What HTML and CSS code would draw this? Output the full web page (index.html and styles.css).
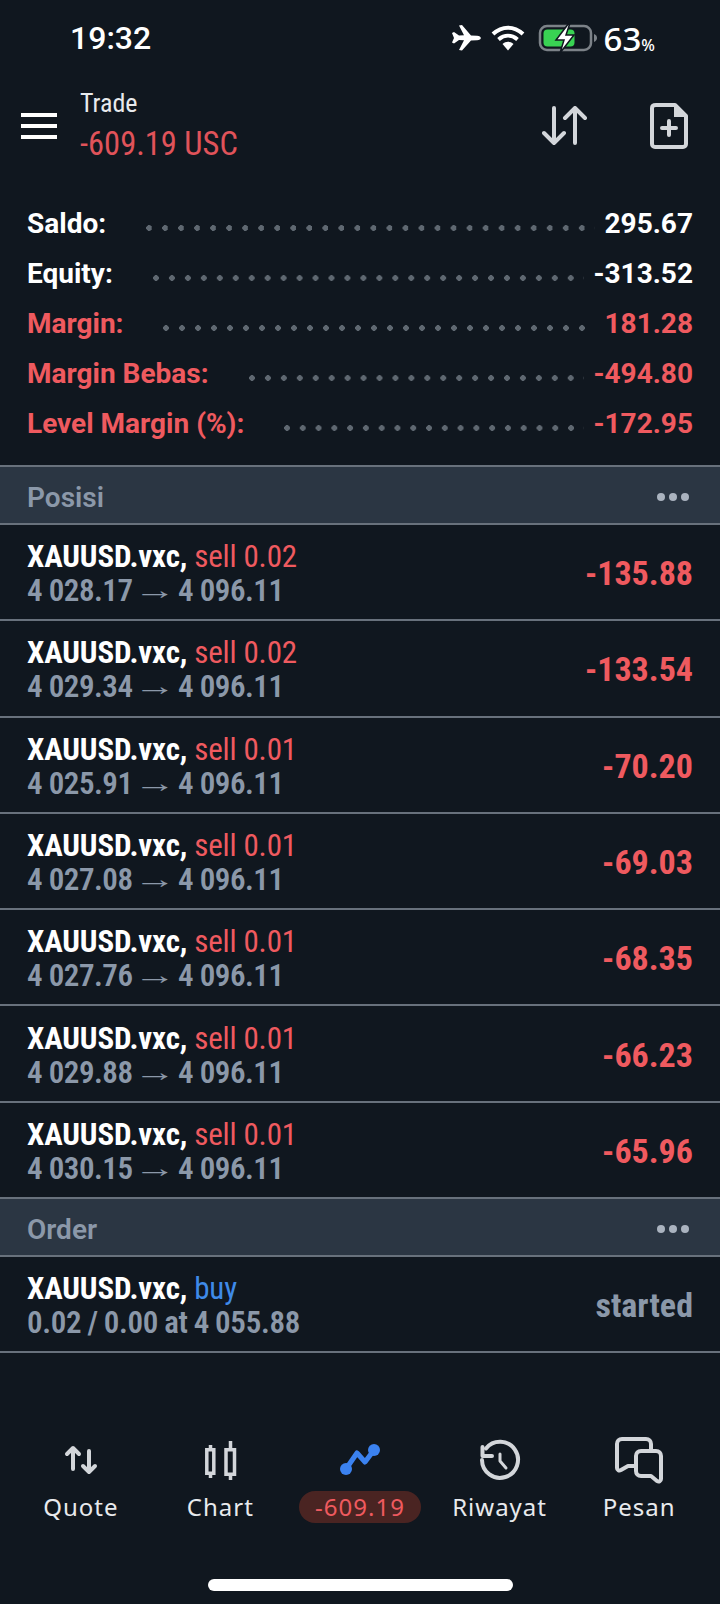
FILE: index.html
```html
<!DOCTYPE html>
<html>
  <head>
    <meta charset="utf-8">
    <title>Trade</title>
    <link rel="stylesheet" href="styles.css">
  </head>
  <body>
    <!-- status bar -->
    <div class="status">
      <span class="time">19:32</span>
      <div class="status-icons">
        <svg width="30" height="28" viewBox="0 0 30 28"><path fill="#fff" d="M1 9l2-1 5 3.500 5-.2L8 1.500 11 1l9 10.500 6 .2c2.500.2 3.800 1 3.800 2.300s-1.300 2.100-3.800 2.300l-6 .2L11 26.500 8 26l5-9.800-5-.2-5 3.500-2-1 2-4.500z"/></svg>
        <svg class="ic-wifi" width="34" height="26" viewBox="0 0 34 26"><path fill="none" stroke="#fff" stroke-width="4" d="M2 9c9-8.500 21-8.500 30 0M7.500 14.500c6-5 13-5 19 0"/><path fill="#fff" d="M11.500 19c3.500-3 7.500-3 11 0L17 25.500z"/></svg>
        <svg width="60" height="30" viewBox="0 0 60 30">
          <rect x="2" y="3" width="51" height="24" rx="7" fill="none" stroke="#7c8288" stroke-width="2.500"/>
          <rect x="5.500" y="6.500" width="31" height="17" rx="4" fill="#39d353"/>
          <path fill="#7c8288" d="M56 11c2 .8 3 2.200 3 4s-1 3.200-3 4z"/>
          <path fill="#fff" stroke="#10171f" stroke-width="1.500" d="M31 0L18 17h8l-4 13 14-18h-8l4-12z"/>
        </svg>
        <span class="batt">63<small>%</small></span>
      </div>
    </div>

    <!-- top bar -->
    <header class="topbar">
      <div class="burger"><i></i><i></i><i></i></div>
      <div class="title">
        <div class="title-sm">Trade</div>
        <div class="title-lg">-609.19 USC</div>
      </div>
      <svg class="ic-swap" width="46" height="40" viewBox="0 0 46 40"><path fill="none" stroke="#d3d6da" stroke-width="4" stroke-linecap="round" stroke-linejoin="round" d="M12 2v35M2 27l10 10 10-10M33 37V2M23 12L33 2l10 10"/></svg>
      <svg class="ic-doc" width="38" height="46" viewBox="0 0 38 46"><path fill="none" stroke="#d3d6da" stroke-width="4" stroke-linejoin="round" d="M6 2h19l11 11v28c0 1.700-1.300 3-3 3H5c-1.700 0-3-1.300-3-3V5c0-1.700 1.300-3 4-3z"/><path fill="#d3d6da" d="M24 2l12 12H24z"/><path fill="none" stroke="#d3d6da" stroke-width="4" stroke-linecap="round" d="M19 18v14M12 25h14"/></svg>
    </header>

    <!-- account summary -->
    <section class="summary">
      <div class="sum-row"><span>Saldo:</span><i class="leader"></i><span>295.67</span></div>
      <div class="sum-row"><span>Equity:</span><i class="leader"></i><span>-313.52</span></div>
      <div class="sum-row red"><span>Margin:</span><i class="leader"></i><span>181.28</span></div>
      <div class="sum-row red"><span>Margin Bebas:</span><i class="leader"></i><span>-494.80</span></div>
      <div class="sum-row red"><span>Level Margin (%):</span><i class="leader"></i><span>-172.95</span></div>
    </section>

    <div class="sec-head"><span>Posisi</span><div class="more"><i></i><i></i><i></i></div></div>

    <div class="row">
      <div class="row-left"><div class="l1"><b>XAUUSD.vxc,</b> <span class="red">sell 0.02</span></div><div class="l2">4 028.17 <em>→</em> 4 096.11</div></div>
      <div class="profit">-135.88</div>
    </div>
    <div class="row">
      <div class="row-left"><div class="l1"><b>XAUUSD.vxc,</b> <span class="red">sell 0.02</span></div><div class="l2">4 029.34 <em>→</em> 4 096.11</div></div>
      <div class="profit">-133.54</div>
    </div>
    <div class="row">
      <div class="row-left"><div class="l1"><b>XAUUSD.vxc,</b> <span class="red">sell 0.01</span></div><div class="l2">4 025.91 <em>→</em> 4 096.11</div></div>
      <div class="profit">-70.20</div>
    </div>
    <div class="row">
      <div class="row-left"><div class="l1"><b>XAUUSD.vxc,</b> <span class="red">sell 0.01</span></div><div class="l2">4 027.08 <em>→</em> 4 096.11</div></div>
      <div class="profit">-69.03</div>
    </div>
    <div class="row">
      <div class="row-left"><div class="l1"><b>XAUUSD.vxc,</b> <span class="red">sell 0.01</span></div><div class="l2">4 027.76 <em>→</em> 4 096.11</div></div>
      <div class="profit">-68.35</div>
    </div>
    <div class="row">
      <div class="row-left"><div class="l1"><b>XAUUSD.vxc,</b> <span class="red">sell 0.01</span></div><div class="l2">4 029.88 <em>→</em> 4 096.11</div></div>
      <div class="profit">-66.23</div>
    </div>
    <div class="row">
      <div class="row-left"><div class="l1"><b>XAUUSD.vxc,</b> <span class="red">sell 0.01</span></div><div class="l2">4 030.15 <em>→</em> 4 096.11</div></div>
      <div class="profit">-65.96</div>
    </div>

    <div class="sec-head"><span>Order</span><div class="more"><i></i><i></i><i></i></div></div>

    <div class="row">
      <div class="row-left"><div class="l1"><b>XAUUSD.vxc,</b> <span class="blue">buy</span></div><div class="l2 tight">0.02 / 0.00 at 4 055.88</div></div>
      <div class="profit grey">started</div>
    </div>

    <!-- bottom nav -->
    <nav class="nav">
      <div class="nav-item">
        <div class="nav-icon"><svg width="36" height="32" viewBox="0 0 36 32"><path fill="none" stroke="#d3d6da" stroke-width="4" stroke-linecap="round" stroke-linejoin="round" d="M10 25V4M4 10l6-6 6 6M26 7v21M20 22l6 6 6-6"/></svg></div>
        <span>Quote</span>
      </div>
      <div class="nav-item">
        <div class="nav-icon"><svg width="36" height="42" viewBox="0 0 36 42"><path fill="none" stroke="#d3d6da" stroke-width="3.500" d="M4.800 10.800h7v23.500h-7zM24 10.800h8.500v24.500H24zM8.500 6v5M8.500 34v5M28.500 2v9M28.500 35v6"/></svg></div>
        <span>Chart</span>
      </div>
      <div class="nav-item">
        <div class="nav-icon"><svg width="44" height="36" viewBox="0 0 44 36"><path fill="none" stroke="#3b82f0" stroke-width="5" stroke-linecap="round" stroke-linejoin="round" d="M8 27L19 11l8 9 9-12"/><circle cx="8" cy="27" r="6" fill="#3b82f0"/><circle cx="36" cy="8" r="6" fill="#3b82f0"/></svg></div>
        <span class="pill">-609.19</span>
      </div>
      <div class="nav-item">
        <div class="nav-icon"><svg width="42" height="42" viewBox="0 0 42 42"><path fill="none" stroke="#d3d6da" stroke-width="4" stroke-linecap="round" d="M3 21A18 18 0 1 0 7 9.500"/><path fill="none" stroke="#d3d6da" stroke-width="4" stroke-linecap="round" stroke-linejoin="round" d="M3.500 8v9H13"/><path fill="none" stroke="#d3d6da" stroke-width="3" stroke-linecap="round" stroke-linejoin="round" d="M21 15v7l6 7"/></svg></div>
        <span>Riwayat</span>
      </div>
      <div class="nav-item">
        <div class="nav-icon"><svg width="50" height="48" viewBox="0 0 50 48"><path fill="none" stroke="#d3d6da" stroke-width="4" stroke-linejoin="round" d="M20 30h-6l-7 4c-2 1-4 0-4-2V8c0-3 2-5 5-5h24c3 0 5 2 5 5v6"/><path fill="none" stroke="#d3d6da" stroke-width="4" stroke-linejoin="round" d="M27 15h15c3 0 5 2 5 5v23c0 2-2 3-4 2l-6-5H27c-3 0-5-2-5-5V20c0-3 2-5 5-5z"/></svg></div>
        <span>Pesan</span>
      </div>
    </nav>
    <div class="home-bar"></div>
  </body>
</html>
```

FILE: styles.css
```css
* {
  box-sizing: border-box;
}

body {
  margin: 0;
  width: 720px;
  height: 1604px;
  overflow: hidden;
  background: #10171f;
  color: #fff;
  font-family: Roboto, sans-serif;
}

i {
  display: block;
}

.red {
  color: #ef5a5f;
}

.blue {
  color: #3f8ae8;
}

/* status bar */
.status {
  height: 80px;
  padding: 0 65px 4px 70px;
  display: flex;
  justify-content: space-between;
  align-items: center;
}

.time {
  font-size: 32px;
  font-weight: 500;
}

.status-icons {
  display: flex;
  align-items: center;
  gap: 10px;
}

.ic-wifi {
  margin-right: 3px;
}

.batt {
  font-family: "Noto Sans", sans-serif;
  font-size: 33px;
  font-weight: 500;
  margin-left: -4px;
}

.batt small {
  font-size: 16px;
}

/* top bar */
.topbar {
  height: 92px;
  padding-left: 21px;
  display: flex;
  align-items: center;
}

.burger {
  width: 36px;
  display: flex;
  flex-direction: column;
  gap: 7px;
}

.burger i {
  height: 4px;
  background: #fff;
}

.title {
  margin: -5px 0 0 23px;
  flex: 1;
}

.title-sm {
  font-size: 26px;
  line-height: 40px;
  color: #e8eaed;
  font-stretch: 75%;
}

.title-lg {
  font-size: 32.500px;
  line-height: 42px;
  color: #e0535a;
  font-stretch: 75%;
}

.ic-swap {
  margin-right: 62px;
}

.ic-doc {
  margin-right: 32px;
}

/* summary */
.summary {
  padding: 26px 27px 17px 27px;
}

.sum-row {
  height: 50px;
  display: flex;
  align-items: center;
  font-size: 28px;
  font-weight: 700;
}

.leader {
  flex: 1;
  height: 6px;
  margin: 10px 10px 0 40px;
  background: radial-gradient(circle at 3px 3px, #5f6871 2.700px, transparent 3px) 0 0 / 16px 6px round;
}

/* section headers */
.sec-head {
  height: 60px;
  padding: 4px 31px 0 27px;
  display: flex;
  justify-content: space-between;
  align-items: center;
  background: #2b3643;
  border-top: 2px solid #68717c;
  border-bottom: 2px solid #68717c;
  color: #8b98a9;
  font-size: 28px;
  font-weight: 600;
}

.row + .sec-head {
  height: 58px;
  border-top: none;
}

.more {
  display: flex;
  gap: 4px;
}

.more i {
  width: 8px;
  height: 8px;
  border-radius: 50%;
  background: #aab3bf;
}

/* position rows */
.row {
  height: 96.300px;
  padding: 0 27px 0 27px;
  display: flex;
  justify-content: space-between;
  align-items: center;
  border-bottom: 2px solid #68717c;
  font-stretch: 75%;
}

.row-left {
  padding-top: 4px;
}

.l1 {
  font-size: 31px;
  line-height: 34px;
  letter-spacing: -0.15px;
}

.l1 span {
  font-weight: 400;
}

.l2 {
  display: flex;
  font-size: 31px;
  line-height: 34px;
  letter-spacing: -0.5px;
  font-weight: 600;
  color: #8b98a9;
}

.l2.tight {
  letter-spacing: -0.3px;
  word-spacing: -0.8px;
}

.l2 em {
  margin: 0 10.500px 0 9.500px;
  font-family: "Liberation Sans", sans-serif;
  font-size: 26px;
  font-style: normal;
  font-weight: 400;
  transform: translateY(-1px) scaleX(1.630);
}

.profit {
  margin-top: 2px;
  font-size: 34px;
  font-weight: 700;
  color: #ef5a5f;
}

.profit.grey {
  color: #8b98a9;
}

/* bottom nav */
.nav {
  margin-top: 83px;
  padding: 0 11px;
  display: grid;
  grid-template-columns: repeat(5, 1fr);
}

.nav-item {
  display: flex;
  flex-direction: column;
  align-items: center;
  gap: 7px;
  font-family: "Noto Sans", sans-serif;
  font-size: 24px;
  line-height: 32px;
  letter-spacing: 1px;
  color: #e8eaed;
}

.nav-icon {
  height: 48px;
  display: flex;
  align-items: center;
}

.pill {
  padding: 0 16px;
  border-radius: 16px;
  background: #4a2422;
  color: #ef5a5f;
}

.home-bar {
  width: 305px;
  height: 12px;
  margin: 56px auto 0;
  border-radius: 6px;
  background: #fff;
}
```
